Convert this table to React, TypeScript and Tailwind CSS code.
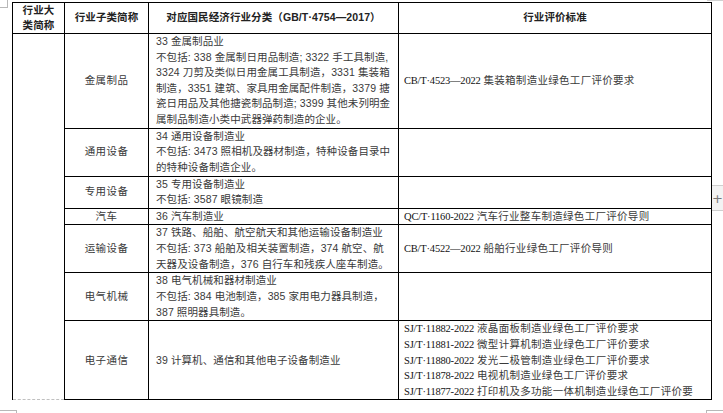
import React from "react";

const cjk = '"Liberation Sans", "Noto Sans CJK SC", sans-serif';
const serifCjk = '"Liberation Serif", "Noto Sans CJK SC", serif';

type Row = {
  h: string;
  sub: string;
  cls: string[];
  std: [string, string][];
  clsMiddle?: boolean;
};

const rows: Row[] = [
  {
    h: "h-[94px]",
    sub: "金属制品",
    cls: [
      "33 金属制品业",
      "不包括: 338 金属制日用品制造; 3322 手工具制造,",
      "3324 刀剪及类似日用金属工具制造，3331 集装箱",
      "制造，3351 建筑、家具用金属配件制造，3379 搪",
      "瓷日用品及其他搪瓷制品制造; 3399 其他未列明金",
      "属制品制造小类中武器弹药制造的企业。",
    ],
    std: [["CB/T·4523—2022", "集装箱制造业绿色工厂评价要求"]],
  },
  {
    h: "h-[48px]",
    sub: "通用设备",
    cls: [
      "34 通用设备制造业",
      "不包括: 3473 照相机及器材制造，特种设备目录中",
      "的特种设备制造企业。",
    ],
    std: [],
  },
  {
    h: "h-[32px]",
    sub: "专用设备",
    cls: ["35 专用设备制造业", "不包括: 3587 眼镜制造"],
    std: [],
  },
  {
    h: "h-[16px]",
    sub: "汽车",
    cls: ["36 汽车制造业"],
    std: [["QC/T·1160-2022", "汽车行业整车制造绿色工厂评价导则"]],
  },
  {
    h: "h-[48px]",
    sub: "运输设备",
    cls: [
      "37 铁路、船舶、航空航天和其他运输设备制造业",
      "不包括: 373 船舶及相关装置制造，374 航空、航",
      "天器及设备制造，376 自行车和残疾人座车制造。",
    ],
    std: [["CB/T·4522—2022", "船舶行业绿色工厂评价导则"]],
  },
  {
    h: "h-[48px]",
    sub: "电气机械",
    cls: [
      "38 电气机械和器材制造业",
      "不包括: 384 电池制造，385 家用电力器具制造，",
      "387 照明器具制造。",
    ],
    std: [],
  },
  {
    h: "h-[78px]",
    sub: "电子通信",
    cls: ["39 计算机、通信和其他电子设备制造业"],
    clsMiddle: true,
    std: [
      ["SJ/T·11882-2022", "液晶面板制造业绿色工厂评价要求"],
      ["SJ/T·11881-2022", "微型计算机制造业绿色工厂评价要求"],
      ["SJ/T·11880-2022", "发光二极管制造业绿色工厂评价要求"],
      ["SJ/T·11878-2022", "电视机制造业绿色工厂评价要求"],
      ["SJ/T·11877-2022", "打印机及多功能一体机制造业绿色工厂评价要"],
    ],
  },
];

export default function App() {
  return (
    <div className="relative w-[723px] h-[413px] bg-white overflow-hidden">
      {/* page corner marks */}
      <div className="absolute left-0 top-0 w-[8px] h-[8px] border-r border-b border-[#b8b8b8]" />
      <div className="absolute right-0 top-0 w-[16px] h-[1px] bg-[#d0d0d0]" />
      <div className="absolute left-0 top-[410px] w-[17px] h-[3px] border-t border-r border-[#b8b8b8]" />
      <div className="absolute left-[706px] top-[410px] w-[17px] h-[3px] border-t border-l border-[#b8b8b8]" />
      {/* add column button */}
      <div
        className="absolute left-[712px] top-[185px] w-[11px] h-[26px] bg-[#f3f3f3] border-t border-b border-[#cfcfcf] flex items-center justify-center text-[#777] text-[13px] leading-none"
        style={{ fontFamily: '"DejaVu Sans", sans-serif' }}
      >
        +
      </div>

      <div className="pl-[12px] pt-[2px]">
        <table
          className="table-fixed border-collapse text-[10.5px] text-[#3a3a3a] tracking-[0.1px]"
          style={{ fontFamily: cjk }}
        >
          <colgroup>
            <col className="w-[52px]" />
            <col className="w-[84px]" />
            <col className="w-[250px]" />
            <col className="w-[313px]" />
          </colgroup>
          <thead>
            <tr className="h-[31px]">
              <th className="border border-black p-0 align-middle text-center font-bold leading-[15px] text-[#222]">
                行业大
                <br />
                类简称
              </th>
              <th className="border border-black p-0 align-middle text-center font-bold text-[#222]">
                行业子类简称
              </th>
              <th className="border border-black p-0 align-middle text-center font-bold text-[#222] whitespace-nowrap">
                对应国民经济行业分类（GB/T·4754—2017）
              </th>
              <th className="border border-black p-0 align-middle text-center font-bold text-[#222]">
                行业评价标准
              </th>
            </tr>
          </thead>
          <tbody>
            {rows.map((r, i) => (
              <tr key={i} className={r.h}>
                {i === 0 && (
                  <td
                    rowSpan={rows.length}
                    className="border-l border-r border-black border-b border-b-[#c0c0c0] p-0"
                    style={{ borderBottomStyle: "dashed" }}
                  />
                )}
                <td className="border border-black p-0 align-middle text-center leading-[15.5px] tracking-[0.4px]">
                  {r.sub}
                </td>
                <td
                  className={`border border-black p-0 pl-[7px] leading-[15.6px] whitespace-nowrap overflow-hidden ${
                    r.clsMiddle ? "align-middle" : "align-top"
                  }`}
                >
                  {r.cls.map((l, j) => (
                    <div key={j}>{l}</div>
                  ))}
                </td>
                <td className="border border-black p-0 pl-[5px] align-middle leading-[15.6px] whitespace-nowrap tracking-normal">
                  {r.std.map(([code, name], j) => (
                    <div key={j}>
                      <span
                        className="text-[#111] tracking-[-0.2px]"
                        style={{ fontFamily: serifCjk }}
                      >
                        {code}
                      </span>{" "}
                      <span className="text-[#3a3a3a] tracking-[0.3px]">{name}</span>
                    </div>
                  ))}
                </td>
              </tr>
            ))}
          </tbody>
        </table>
      </div>
    </div>
  );
}
